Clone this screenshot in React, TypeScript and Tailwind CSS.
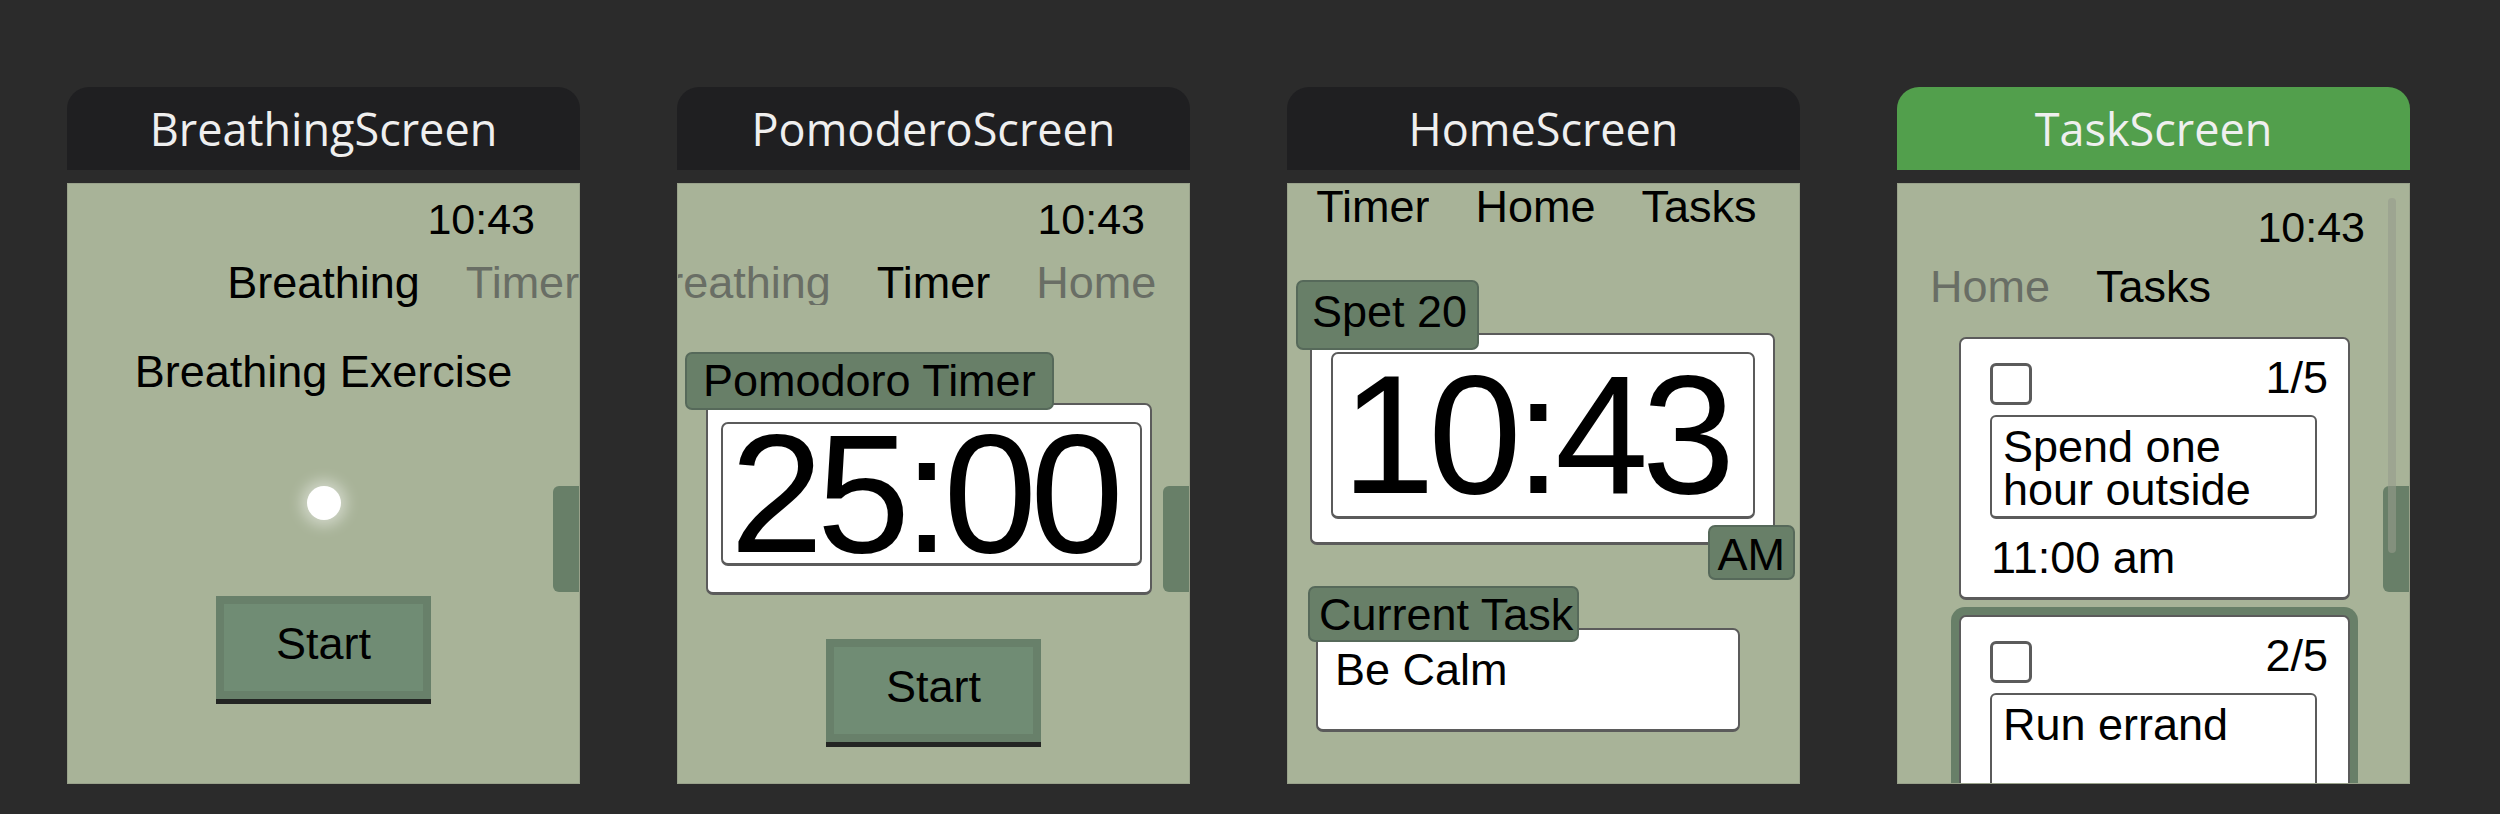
import React from "react";

const screenFont = "font-['Liberation_Sans',Arial,sans-serif] text-[45px] leading-[44px] text-black";

const Nav = ({ prev, active, next, allDark = false, className = "" }: { prev?: string; active: string; next?: string; allDark?: boolean; className?: string }) => {
  const side = allDark ? "text-black" : "text-[#696e65]";
  return (
    <div className={`grid grid-cols-[minmax(0,1fr)_auto_minmax(0,1fr)] gap-x-[46px] whitespace-nowrap ${className}`}>
      <div className={`flex justify-end overflow-hidden ${side}`}>
        <span className="shrink-0">{prev}</span>
      </div>
      <div>{active}</div>
      <div className={`flex justify-start overflow-hidden ${side}`}>
        <span className="shrink-0">{next}</span>
      </div>
    </div>
  );
};

const Clock = ({ className = "" }: { className?: string }) => (
  <div className={`pr-[44px] text-right text-[43px] ${className}`}>10:43</div>
);

const SideTab = () => (
  <div className="absolute right-0 top-[302px] h-[106px] w-[26px] rounded-l-[6px] bg-[#687f68]" />
);

const StartButton = ({ className = "" }: { className?: string }) => (
  <div className={`flex justify-center ${className}`}>
    <div className="flex h-[103px] w-[215px] items-center justify-center border-[8px] border-[#68806a] bg-[#708c74] pb-[8px] shadow-[0_5px_0_#232523]">
      Start
    </div>
  </div>
);

const Card = ({ title, active = false, children }: { title: string; active?: boolean; children: React.ReactNode }) => (
  <div className="w-[513px] shrink-0">
    <div
      className={`flex h-[83px] items-center justify-center rounded-t-[22px] font-['Open_Sans',sans-serif] text-[45px] leading-none text-[#efefef] ${
        active ? "bg-[#529f4c]" : "bg-[#1f1f21]"
      }`}
    >
      {title}
    </div>
    <div className={`relative mt-[13px] flex h-[601px] flex-col overflow-hidden border border-[#99a28b] bg-[#a8b398] ${screenFont}`}>
      {children}
    </div>
  </div>
);

const TaskItem = ({ num, text, time }: { num: string; text: string; time?: string }) => (
  <div className="h-[263px] rounded-[7px] border-2 border-b-[3px] border-[#5b5b5b] bg-white pl-[29px] pr-[20px] pt-[24px]">
    <div className="flex items-start justify-between">
      <div className="h-[42px] w-[42px] rounded-[6px] border-[3px] border-[#5b5b5b]" />
      <div className="-mt-[7px]">{num}</div>
    </div>
    <div className="mt-[10px] h-[104px] w-[327px] rounded-[6px] border-2 border-b-[3px] border-[#5b5b5b] pl-[11px] pr-[20px] pt-[8px] leading-[43px]">
      {text}
    </div>
    {time && <div className="mt-[17px] pl-[1px]">{time}</div>}
  </div>
);

const App = () => {
  return (
    <div className="flex min-h-[814px] gap-[97px] bg-[#2b2b2b] pl-[67px] pt-[87px]">
      <Card title="BreathingScreen">
        <Clock className="pt-[13px]" />
        <Nav active="Breathing" next="Timer" className="mt-[20px]" />
        <div className="mt-[45px] text-center">Breathing Exercise</div>
        <div className="mt-[92px] flex justify-center">
          <div className="h-[34px] w-[34px] rounded-full bg-white shadow-[0_0_14px_6px_rgba(255,255,255,0.45)]" />
        </div>
        <StartButton className="mt-[76px]" />
        <SideTab />
      </Card>

      <Card title="PomoderoScreen">
        <Clock className="pt-[13px]" />
        <Nav prev="Breathing" active="Timer" next="Home" className="mt-[20px]" />
        <div className="relative z-10 ml-[7px] mt-[47px] self-start rounded-[7px] border-2 border-[#56695a] bg-[#687f68] px-[16px] py-[5px]">
          Pomodoro Timer
        </div>
        <div className="-mt-[7px] ml-[28px] h-[192px] w-[446px] rounded-[7px] border-2 border-b-[3px] border-[#5b5b5b] bg-white pb-[26px] pl-[13px] pr-[8px] pt-[17px]">
          <div className="flex h-full items-center justify-center rounded-[7px] border-2 border-b-[3px] border-[#5b5b5b] pr-[16px] text-[168px] leading-none tracking-[-0.04em]">
            25:00
          </div>
        </div>
        <StartButton className="mt-[44px]" />
        <SideTab />
      </Card>

      <Card title="HomeScreen">
        <Nav prev="Timer" active="Home" next="Tasks" allDark className="pr-[16px] pt-[1px]" />
        <div className="relative z-10 ml-[8px] mt-[51px] self-start rounded-[7px] border-2 border-[#56695a] bg-[#687f68] pb-[14px] pl-[14px] pr-[10px] pt-[8px]">
          Spet 20
        </div>
        <div className="relative -mt-[17px] ml-[22px] h-[212px] w-[465px] rounded-[7px] border-2 border-b-[3px] border-[#5b5b5b] bg-white pb-[23px] pl-[19px] pr-[18px] pt-[17px]">
          <div className="flex h-full items-center justify-center rounded-[7px] border-2 border-b-[3px] border-[#5b5b5b] pr-[16px] text-[168px] leading-none tracking-[-0.04em]">
            10:43
          </div>
          <div className="absolute -bottom-[38px] -right-[22px] z-10 rounded-[7px] border-2 border-[#56695a] bg-[#687f68] px-[8px] pb-[1px] pt-[6px]">
            AM
          </div>
        </div>
        <div className="relative z-10 ml-[20px] mt-[41px] self-start rounded-[7px] border-2 border-[#56695a] bg-[#687f68] pb-[3px] pl-[9px] pr-[4px] pt-[5px]">
          Current Task
        </div>
        <div className="-mt-[14px] ml-[28px] h-[104px] w-[424px] rounded-[7px] border-2 border-b-[3px] border-[#5b5b5b] bg-white pl-[17px] pt-[18px]">
          Be Calm
        </div>
      </Card>

      <Card title="TaskScreen" active>
        <Clock className="pt-[21px]" />
        <Nav prev="Home" active="Tasks" className="mt-[16px]" />
        <div className="ml-[61px] mt-[28px] w-[391px]">
          <TaskItem num="1/5" text="Spend one hour outside" time="11:00 am" />
          <div className="-mx-[8px] mt-[7px] rounded-[14px] bg-[#687f68] p-[8px]">
            <TaskItem num="2/5" text="Run errand" />
          </div>
        </div>
        <SideTab />
        <div className="absolute right-[13px] top-[14px] h-[355px] w-[8px] rounded-full bg-[rgba(150,155,140,0.6)]" />
      </Card>
    </div>
  );
};

export default App;
